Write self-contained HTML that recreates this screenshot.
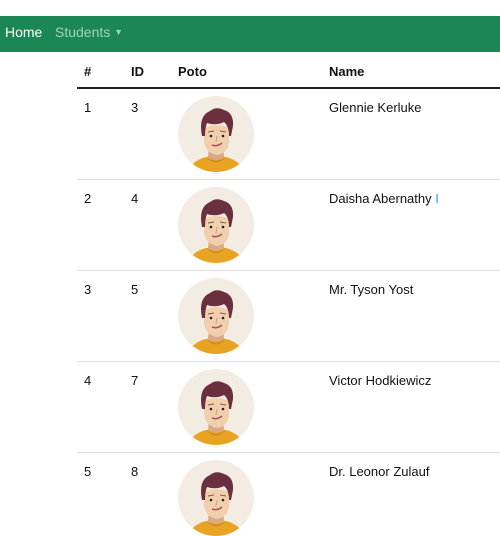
<!DOCTYPE html>
<html><head><style>
body{margin:0;width:500px;height:500px;overflow:hidden;background:#fff;font-family:"Liberation Sans",sans-serif;font-size:13px;color:#111}
.nav{position:absolute;top:16px;left:0;width:500px;height:36px;background:#1a8754}
.nav span{position:absolute;top:8px;font-size:14px}
.h{position:absolute;top:13px;font-weight:bold;font-size:13px}
.thick{position:absolute;left:77px;top:87px;width:423px;height:2px;background:#222}
.sep{position:absolute;left:77px;width:423px;height:1px;background:#dee2e6}
.c{position:absolute;font-size:13px}
svg{position:absolute}
</style></head><body>
<div class="nav"><span style="left:5px;color:#fff">Home</span><span style="left:55px;color:rgba(255,255,255,.6)">Students <span style="position:static;font-size:9px;vertical-align:2px">&#9660;</span></span></div>
<div class="h" style="left:84px;top:64px">#</div>
<div class="h" style="left:131px;top:64px">ID</div>
<div class="h" style="left:178px;top:64px">Poto</div>
<div class="h" style="left:329px;top:64px">Name</div>
<div class="thick"></div>
<svg width="0" height="0"><defs><g id="av">
<circle cx="38" cy="38" r="38" fill="#f3ece2"/>
<clipPath id="cl"><circle cx="38" cy="38" r="38"/></clipPath>
<g clip-path="url(#cl)">
<path d="M8 80 Q12 65 28 61 L48 61 Q64 65 68 80Z" fill="#e8a322"/>
<path d="M28 61 Q38 68 48 61 L46 63 Q38 70 30 63Z" fill="#d48c1c"/>
<path d="M31 50 L45 50 L46 61 Q38 66 30 61Z" fill="#d9a98a"/>
<path d="M26 32 L26 46 Q28 57 39 59 Q50 57 51 46 L51 32 Q38 26 26 32Z" fill="#f2cfac"/>
<path d="M24 40 Q20 20 32 15 Q38 10 46 14 Q56 17 55 30 L53 40 L51 40 Q51 30 46 26 Q38 30 29 27 Q27 32 27 40Z" fill="#6b3040"/>
<circle cx="33" cy="40" r="1.3" fill="#222"/><circle cx="45" cy="40" r="1.3" fill="#222"/>
<path d="M30 36 L36 35 M42 35 L48 36" stroke="#8a5a50" stroke-width="1"/>
<path d="M39 40 L38 46" stroke="#c9a080" stroke-width="1"/>
<path d="M34 49 Q39 51 44 47" stroke="#a55" stroke-width="1.6" fill="none"/>
</g></g></defs></svg>
<div class="c" style="left:84px;top:100px">1</div><div class="c" style="left:131px;top:100px">3</div><div class="c" style="left:329px;top:100px">Glennie Kerluke</div>
<svg style="left:178px;top:96px" width="76" height="76"><use href="#av"/></svg>
<div class="sep" style="top:179px"></div>
<div class="c" style="left:84px;top:191px">2</div><div class="c" style="left:131px;top:191px">4</div><div class="c" style="left:329px;top:191px">Daisha Abernathy <span style="color:#39f">I</span></div>
<svg style="left:178px;top:187px" width="76" height="76"><use href="#av"/></svg>
<div class="sep" style="top:270px"></div>
<div class="c" style="left:84px;top:282px">3</div><div class="c" style="left:131px;top:282px">5</div><div class="c" style="left:329px;top:282px">Mr. Tyson Yost</div>
<svg style="left:178px;top:278px" width="76" height="76"><use href="#av"/></svg>
<div class="sep" style="top:361px"></div>
<div class="c" style="left:84px;top:373px">4</div><div class="c" style="left:131px;top:373px">7</div><div class="c" style="left:329px;top:373px">Victor Hodkiewicz</div>
<svg style="left:178px;top:369px" width="76" height="76"><use href="#av"/></svg>
<div class="sep" style="top:452px"></div>
<div class="c" style="left:84px;top:464px">5</div><div class="c" style="left:131px;top:464px">8</div><div class="c" style="left:329px;top:464px">Dr. Leonor Zulauf</div>
<svg style="left:178px;top:460px" width="76" height="76"><use href="#av"/></svg>
</body></html>
